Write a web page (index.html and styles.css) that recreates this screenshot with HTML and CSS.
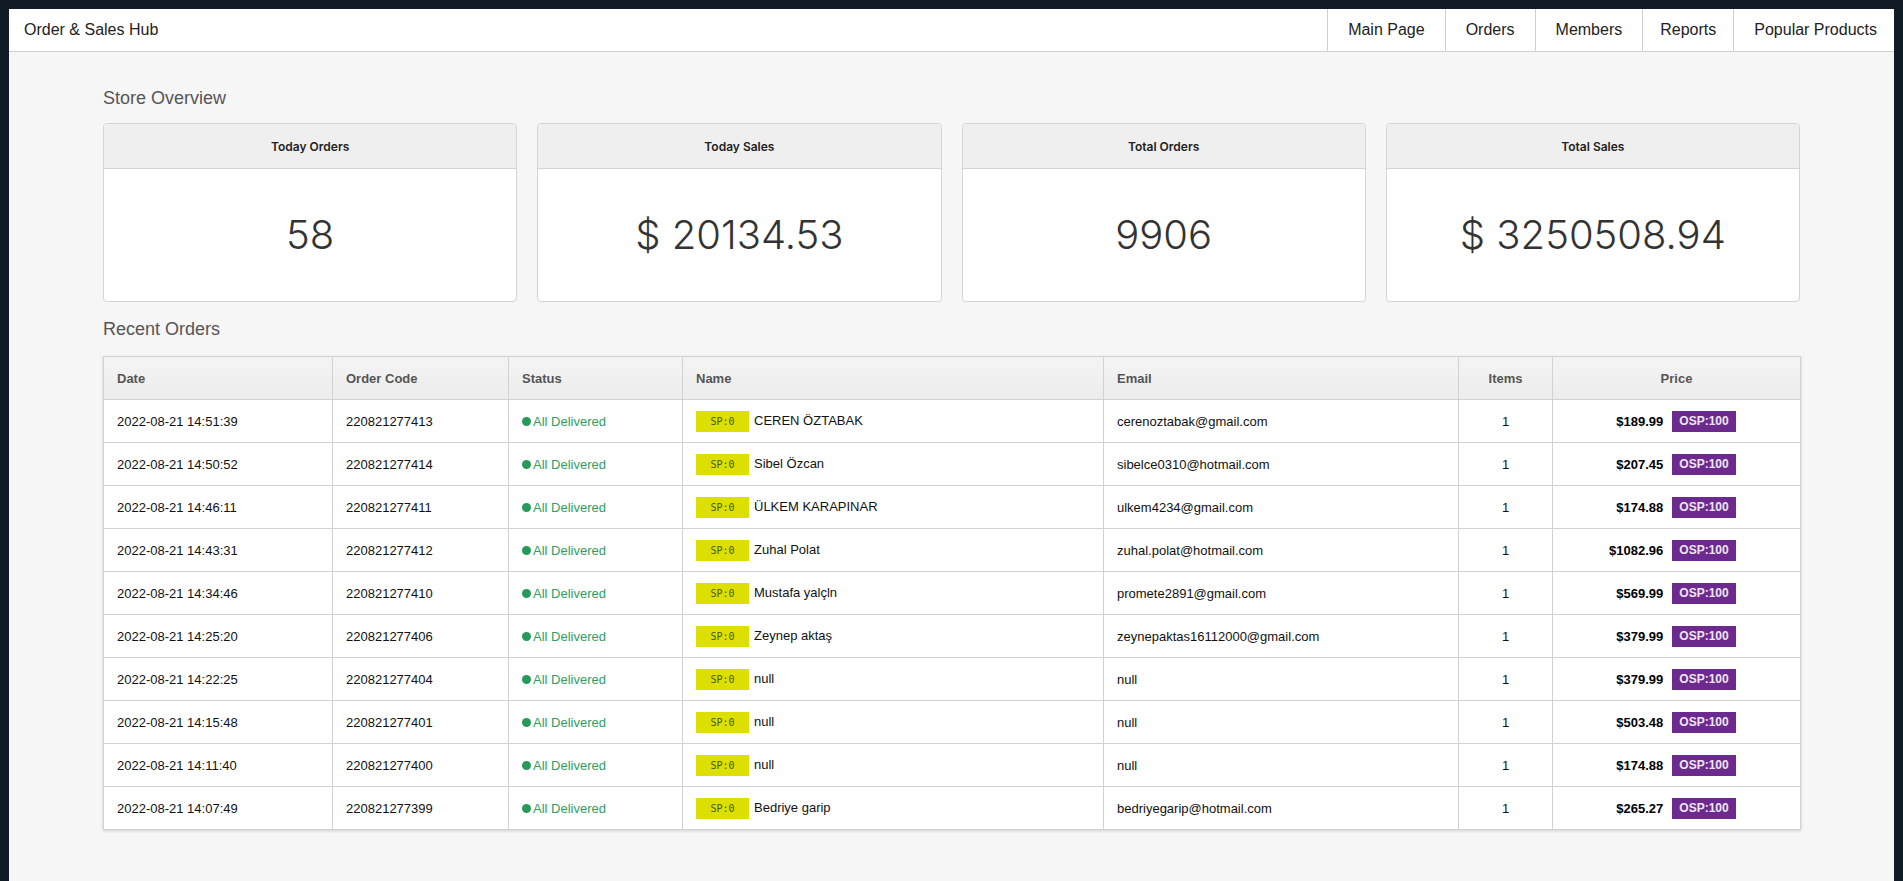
FILE: index.html
```html
<!DOCTYPE html>
<html lang="en">
<head>
  <meta charset="UTF-8" />
  <title>Order &amp; Sales Hub</title>
  <link rel="stylesheet" href="styles.css">
</head>
<body>
  <div class="app">
    <nav class="navbar">
      <div class="brand">Order &amp; Sales Hub</div>
      <ul class="nav-links">
        <li><a href="#">Main Page</a></li>
        <li><a href="#">Orders</a></li>
        <li><a href="#">Members</a></li>
        <li><a href="#">Reports</a></li>
        <li><a href="#">Popular Products</a></li>
      </ul>
    </nav>

    <main class="content">
      <h2 class="section-title">Store Overview</h2>
      <div class="stats">
        <div class="stat-card">
          <div class="stat-head">Today Orders</div>
          <div class="stat-value">58</div>
        </div>
        <div class="stat-card">
          <div class="stat-head">Today Sales</div>
          <div class="stat-value">$ 20134.53</div>
        </div>
        <div class="stat-card">
          <div class="stat-head">Total Orders</div>
          <div class="stat-value">9906</div>
        </div>
        <div class="stat-card">
          <div class="stat-head">Total Sales</div>
          <div class="stat-value">$ 3250508.94</div>
        </div>
      </div>

      <h2 class="section-title recent">Recent Orders</h2>
      <table class="orders">
        <colgroup>
          <col style="width: 229px">
          <col style="width: 176px">
          <col style="width: 174px">
          <col style="width: 421px">
          <col style="width: 355px">
          <col style="width: 94px">
          <col style="width: 248px">
        </colgroup>
        <thead>
          <tr>
            <th>Date</th>
            <th>Order Code</th>
            <th>Status</th>
            <th>Name</th>
            <th>Email</th>
            <th class="center">Items</th>
            <th class="center">Price</th>
          </tr>
        </thead>
        <tbody>
          <tr>
            <td>2022-08-21 14:51:39</td>
            <td>220821277413</td>
            <td><span class="status">All Delivered</span></td>
            <td><span class="sp">SP:0</span>CEREN ÖZTABAK</td>
            <td>cerenoztabak@gmail.com</td>
            <td class="center">1</td>
            <td><div class="price"><span class="amount">$189.99</span><span class="osp">OSP:100</span></div></td>
          </tr>
          <tr>
            <td>2022-08-21 14:50:52</td>
            <td>220821277414</td>
            <td><span class="status">All Delivered</span></td>
            <td><span class="sp">SP:0</span>Sibel Özcan</td>
            <td>sibelce0310@hotmail.com</td>
            <td class="center">1</td>
            <td><div class="price"><span class="amount">$207.45</span><span class="osp">OSP:100</span></div></td>
          </tr>
          <tr>
            <td>2022-08-21 14:46:11</td>
            <td>220821277411</td>
            <td><span class="status">All Delivered</span></td>
            <td><span class="sp">SP:0</span>ÜLKEM KARAPINAR</td>
            <td>ulkem4234@gmail.com</td>
            <td class="center">1</td>
            <td><div class="price"><span class="amount">$174.88</span><span class="osp">OSP:100</span></div></td>
          </tr>
          <tr>
            <td>2022-08-21 14:43:31</td>
            <td>220821277412</td>
            <td><span class="status">All Delivered</span></td>
            <td><span class="sp">SP:0</span>Zuhal Polat</td>
            <td>zuhal.polat@hotmail.com</td>
            <td class="center">1</td>
            <td><div class="price"><span class="amount">$1082.96</span><span class="osp">OSP:100</span></div></td>
          </tr>
          <tr>
            <td>2022-08-21 14:34:46</td>
            <td>220821277410</td>
            <td><span class="status">All Delivered</span></td>
            <td><span class="sp">SP:0</span>Mustafa yalçln</td>
            <td>promete2891@gmail.com</td>
            <td class="center">1</td>
            <td><div class="price"><span class="amount">$569.99</span><span class="osp">OSP:100</span></div></td>
          </tr>
          <tr>
            <td>2022-08-21 14:25:20</td>
            <td>220821277406</td>
            <td><span class="status">All Delivered</span></td>
            <td><span class="sp">SP:0</span>Zeynep aktaş</td>
            <td>zeynepaktas16112000@gmail.com</td>
            <td class="center">1</td>
            <td><div class="price"><span class="amount">$379.99</span><span class="osp">OSP:100</span></div></td>
          </tr>
          <tr>
            <td>2022-08-21 14:22:25</td>
            <td>220821277404</td>
            <td><span class="status">All Delivered</span></td>
            <td><span class="sp">SP:0</span>null</td>
            <td>null</td>
            <td class="center">1</td>
            <td><div class="price"><span class="amount">$379.99</span><span class="osp">OSP:100</span></div></td>
          </tr>
          <tr>
            <td>2022-08-21 14:15:48</td>
            <td>220821277401</td>
            <td><span class="status">All Delivered</span></td>
            <td><span class="sp">SP:0</span>null</td>
            <td>null</td>
            <td class="center">1</td>
            <td><div class="price"><span class="amount">$503.48</span><span class="osp">OSP:100</span></div></td>
          </tr>
          <tr>
            <td>2022-08-21 14:11:40</td>
            <td>220821277400</td>
            <td><span class="status">All Delivered</span></td>
            <td><span class="sp">SP:0</span>null</td>
            <td>null</td>
            <td class="center">1</td>
            <td><div class="price"><span class="amount">$174.88</span><span class="osp">OSP:100</span></div></td>
          </tr>
          <tr>
            <td>2022-08-21 14:07:49</td>
            <td>220821277399</td>
            <td><span class="status">All Delivered</span></td>
            <td><span class="sp">SP:0</span>Bedriye garip</td>
            <td>bedriyegarip@hotmail.com</td>
            <td class="center">1</td>
            <td><div class="price"><span class="amount">$265.27</span><span class="osp">OSP:100</span></div></td>
          </tr>
        </tbody>
      </table>
    </main>
  </div>
</body>
</html>
```

FILE: styles.css
```css
body {
  margin: 0;
  padding: 9px 9px 0;
  background: #101b25;
  font-family: 'Liberation Sans', Arial, sans-serif;
  color: #222;
  overflow: hidden;
}

.app {
  background: #f6f6f6;
  min-height: 900px;
}

.navbar {
  display: flex;
  justify-content: space-between;
  align-items: stretch;
  height: 42px;
  background: #fff;
  border-bottom: 1px solid #cfcfcf;
}

.brand {
  padding-left: 15px;
  font-size: 16px;
  line-height: 42px;
  color: #222;
}

.nav-links {
  display: flex;
  list-style: none;
  margin: 0;
  padding: 0;
}

.nav-links li {
  border-left: 1px solid #cfcfcf;
}

.nav-links a {
  display: block;
  padding: 0 20px;
  font-size: 16px;
  line-height: 42px;
  color: #222;
  text-decoration: none;
}

.nav-links li:nth-child(4) a {
  padding: 0 17px;
}

.nav-links li:last-child a {
  padding: 0 17px 0 20px;
}

.content {
  padding: 0 94px 40px;
}

.section-title {
  margin: 33px 0 12px;
  font-size: 18px;
  font-weight: normal;
  line-height: 26px;
  color: #555;
}

.section-title.recent {
  margin: 14px 0 14px;
}

.stats {
  display: grid;
  grid-template-columns: 41fr 40fr 40fr 41fr;
  gap: 20px;
}

.stat-card {
  background: #fff;
  border: 1px solid #d4d4d4;
  border-radius: 4px;
  overflow: hidden;
  font-family: Inter, 'Liberation Sans', sans-serif;
}

.stat-head {
  height: 44px;
  line-height: 46px;
  background: #efefef;
  border-bottom: 1px solid #d4d4d4;
  text-align: center;
  font-size: 12px;
  font-weight: 600;
  color: #222;
}

.stat-value {
  height: 132px;
  line-height: 132px;
  text-align: center;
  font-size: 40px;
  font-weight: 300;
  color: #333;
}

.orders {
  width: 100%;
  table-layout: fixed;
  border-collapse: collapse;
  background: #fff;
  border: 1px solid #cfcfcf;
  box-shadow: 0 1px 3px rgba(0, 0, 0, 0.15);
  font-size: 13px;
}

.orders th,
.orders td {
  height: 42px;
  padding: 0 13px;
  border: 1px solid #d2d2d2;
  text-align: left;
  white-space: nowrap;
}

.orders th {
  background: linear-gradient(#f4f4f4, #ececec);
  font-weight: bold;
  color: #555;
}

.orders td {
  color: #111;
}

.orders .center {
  text-align: center;
}

.status {
  display: inline-flex;
  align-items: center;
  color: #2f9e63;
}

.status::before {
  content: '';
  width: 9px;
  height: 9px;
  margin-right: 2px;
  border-radius: 50%;
  background: #279a5b;
}

.sp {
  display: inline-block;
  width: 53px;
  height: 21px;
  line-height: 21px;
  margin-right: 5px;
  background: #dcdf00;
  color: #4a5800;
  text-align: center;
  font-family: 'DejaVu Sans Mono', monospace;
  font-size: 10px;
  vertical-align: middle;
}

.price {
  display: flex;
  justify-content: center;
  align-items: center;
  gap: 9px;
  padding-right: 18px;
}

.amount {
  width: 64px;
  text-align: right;
  font-weight: bold;
  color: #000;
}

.osp {
  display: inline-block;
  height: 21px;
  line-height: 21px;
  padding: 0 7px;
  background: #6c2a8e;
  color: #efe6f4;
  font-size: 12px;
  font-weight: bold;
}
```
